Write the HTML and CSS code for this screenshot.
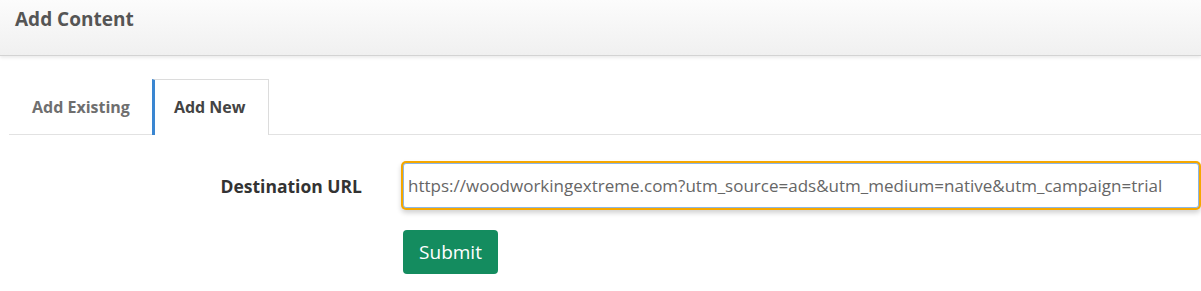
FILE: index.html
```html
<!DOCTYPE html>
<html lang="en">
<head>
  <meta charset="UTF-8" />
  <title>Add Content</title>
  <link rel="stylesheet" href="styles.css">
</head>
<body>
  <div class="panel-header">Add Content</div>

  <ul class="tabs">
    <li class="tab">Add Existing</li>
    <li class="tab active">Add New</li>
  </ul>

  <form class="form">
    <label class="form-label" for="dest-url">Destination URL</label>
    <div class="form-field">
      <input id="dest-url" class="form-input" type="text" value="https://woodworkingextreme.com?utm_source=ads&amp;utm_medium=native&amp;utm_campaign=trial">
    </div>
    <div class="form-field">
      <button type="button" class="btn-submit">Submit</button>
    </div>
  </form>
</body>
</html>
```

FILE: styles.css
```css
html, body {
  margin: 0;
  padding: 0;
  background: #fff;
  font-family: 'Open Sans', sans-serif;
  overflow: hidden;
}

.panel-header {
  height: 48px;
  padding: 7px 15px 0;
  line-height: 24px;
  font-size: 19px;
  font-weight: 700;
  color: #555;
  background: linear-gradient(to bottom, #fcfcfc, #f0f0f0);
  border-bottom: 1px solid #d3d3d3;
  box-shadow: 0 2px 3px rgba(0, 0, 0, 0.08);
}

/* Tabs */
.tabs {
  list-style: none;
  display: flex;
  margin: 23px 0 0 9px;
  padding: 0;
  border-bottom: 1px solid #e2e2e2;
}

.tab {
  height: 55px;
  line-height: 57px;
  padding: 0 22px 0 23px;
  font-size: 16px;
  font-weight: 700;
  color: #6f6f6f;
  margin-bottom: -1px;
}

.tab.active {
  color: #444;
  background: #fff;
  padding: 0 23px 0 19px;
  border-left: 3px solid #3a86d1;
  border-top: 1px solid #dcdcdc;
  border-right: 1px solid #dcdcdc;
  height: 55px;
  line-height: 55px;
}

/* Form */
.form {
  display: grid;
  grid-template-columns: 362px 1fr;
  column-gap: 41px;
  row-gap: 22px;
  align-items: center;
  margin: 28px 2px 0 0;
}

.form-label {
  text-align: right;
  font-size: 17.5px;
  font-weight: 700;
  color: #333;
}

.form-field {
  grid-column: 2;
}

.form-label + .form-field {
  grid-row: 1;
}

.form-input {
  display: block;
  box-sizing: border-box;
  width: 100%;
  height: 45px;
  padding: 0 4px;
  font-family: 'Open Sans', sans-serif;
  font-size: 17px;
  color: #666;
  border: 1px solid #8bb6e6;
  border-radius: 3px;
  outline: none;
  box-shadow: 0 0 0 2px #f5a700, 0 3px 5px 2px rgba(0, 0, 0, 0.18);
}

.btn-submit {
  width: 95px;
  height: 44px;
  border: none;
  border-radius: 4px;
  background: #148c5f;
  color: #fff;
  font-family: 'Open Sans', sans-serif;
  font-size: 19px;
  cursor: pointer;
}
```
